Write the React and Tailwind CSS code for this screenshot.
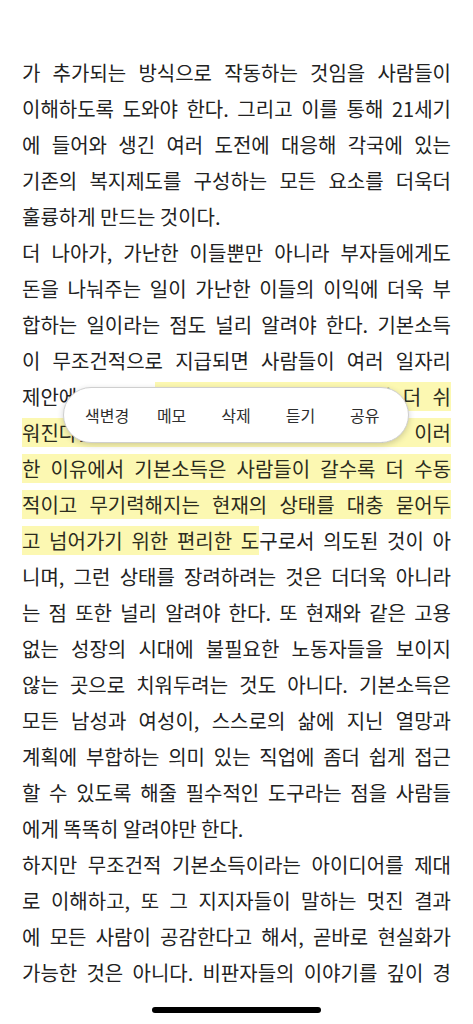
import React from "react";

// each entry is one printed line: [plain, highlighted, plain], last = paragraph end
const lines = [
  ["가 추가되는 방식으로 작동하는 것임을 사람들이"],
  ["이해하도록 도와야 한다. 그리고 이를 통해 21세기"],
  ["에 들어와 생긴 여러 도전에 대응해 각국에 있는"],
  ["기존의 복지제도를 구성하는 모든 요소를 더욱더"],
  ["훌륭하게 만드는 것이다.", "", "", true],
  ["더 나아가, 가난한 이들뿐만 아니라 부자들에게도"],
  ["돈을 나눠주는 일이 가난한 이들의 이익에 더욱 부"],
  ["합하는 일이라는 점도 널리 알려야 한다. 기본소득"],
  ["이 무조건적으로 지급되면 사람들이 여러 일자리"],
  ["제안에 대하여 ", "'아니요'라고 말하기가 훨씬 더 쉬"],
  ["", "워진다는 사실도 분명히 알려야 한다. 이러"],
  ["", "한 이유에서 기본소득은 사람들이 갈수록 더 수동"],
  ["", "적이고 무기력해지는 현재의 상태를 대충 묻어두"],
  ["", "고 넘어가기 위한 편리한 도", "구로서 의도된 것이 아"],
  ["니며, 그런 상태를 장려하려는 것은 더더욱 아니라"],
  ["는 점 또한 널리 알려야 한다. 또 현재와 같은 고용"],
  ["없는 성장의 시대에 불필요한 노동자들을 보이지"],
  ["않는 곳으로 치워두려는 것도 아니다. 기본소득은"],
  ["모든 남성과 여성이, 스스로의 삶에 지닌 열망과"],
  ["계획에 부합하는 의미 있는 직업에 좀더 쉽게 접근"],
  ["할 수 있도록 해줄 필수적인 도구라는 점을 사람들"],
  ["에게 똑똑히 알려야만 한다.", "", "", true],
  ["하지만 무조건적 기본소득이라는 아이디어를 제대"],
  ["로 이해하고, 또 그 지지자들이 말하는 멋진 결과"],
  ["에 모든 사람이 공감한다고 해서, 곧바로 현실화가"],
  ["가능한 것은 아니다. 비판자들의 이야기를 깊이 경"],
];

const menu = ["색변경", "메모", "삭제", "듣기", "공유"];

const App = () => {
  return (
    <div className="relative w-[473px] h-[1024px] bg-white overflow-hidden font-['Noto_Sans_CJK_KR','Noto_Sans',sans-serif]">
      {/* reading page */}
      <div className="h-[983px] overflow-hidden px-[22px] pt-[55px] text-[20px] leading-[36px] text-[#222222]">
        {lines.map(([plain, marked, rest, end], i) => (
          <div
            key={i}
            className={end ? "text-left" : "text-justify [text-align-last:justify]"}
          >
            {plain}
            {marked && <span className="bg-[#fcf8b2] text-[#2c2c1e]">{marked}</span>}
            {rest}
          </div>
        ))}
      </div>

      {/* selection menu */}
      <div className="absolute left-[63px] top-[387px] w-[346px] h-[56px] flex items-center px-[11px] bg-white rounded-full border border-[#cfcfcf] shadow-[0_2px_6px_rgba(0,0,0,0.18)]">
        {menu.map((m) => (
          <div key={m} className="w-[65px] text-center text-[16px] text-[#2e2e2e]">
            {m}
          </div>
        ))}
      </div>

      {/* home indicator */}
      <div className="flex justify-center pt-[24px]">
        <div className="w-[169px] h-[6px] rounded-full bg-black" />
      </div>
    </div>
  );
};

export default App;
